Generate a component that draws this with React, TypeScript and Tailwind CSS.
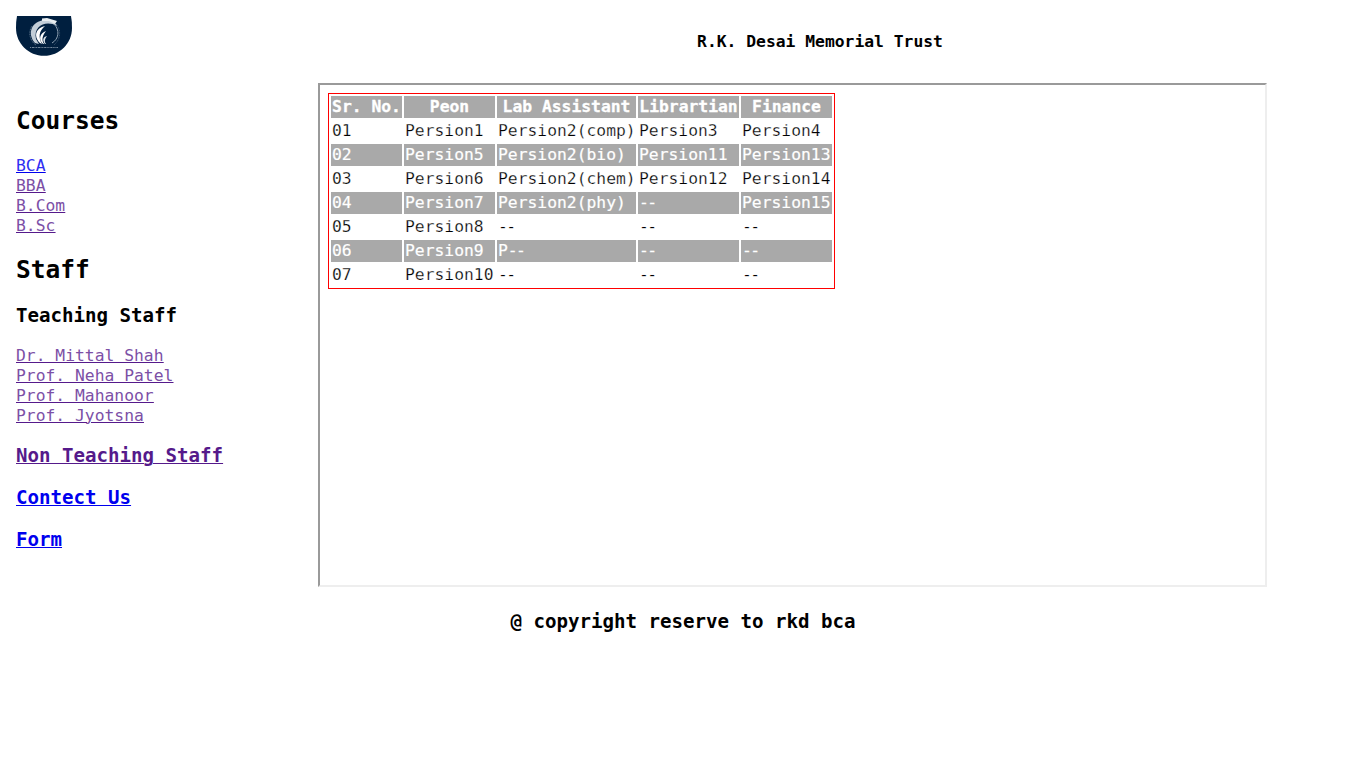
const header = ["Sr. No.", "Peon", "Lab Assistant", "Librartian", "Finance"];
const rows = [
  ["01", "Persion1", "Persion2(comp)", "Persion3", "Persion4"],
  ["02", "Persion5", "Persion2(bio)", "Persion11", "Persion13"],
  ["03", "Persion6", "Persion2(chem)", "Persion12", "Persion14"],
  ["04", "Persion7", "Persion2(phy)", "--", "Persion15"],
  ["05", "Persion8", "--", "--", "--"],
  ["06", "Persion9", "P--", "--", "--"],
  ["07", "Persion10", "--", "--", "--"],
];

function Logo() {
  return (
    <svg className="block h-[42px] w-[56px]" viewBox="0 0 56 42" role="img" aria-label="Trust logo">
      <path d="M1 0H55Q56 5 56 12C56 27.5 43.5 39.8 28 39.8C12.5 39.8 0 27.5 0 12Q0 5 1 0Z" fill="#001f3f" />
      <path d="M20 29A14 14 0 0 1 16 10" fill="none" stroke="#71869b" strokeWidth="1" strokeDasharray="1 .7" />
      <path d="M19 27C11 18 15 5 29 4C35 4 39 6 41 10C31 4 17 9 20 23L23 28Z" fill="#c3ced8" />
      <path d="M26 2.5L31 2L41 5L39 8L33 5L26 5Z" fill="#e8edf0" />
      <path d="M24 27C17 20 20 12 29 10C23 15 22 21 26 28Z" fill="#fff" />
      <path d="M27 28C22 23 24 17 30 15C27 19 25 23 28 28Z" fill="#fff" />
      <path d="M29 28C26 24 27 21 31 20C29 23 28 25 30 28Z" fill="#dce4ea" />
      <path d="M38 8C44 14 43 23 36 27" fill="none" stroke="#8fa1b2" strokeWidth="1" />
      <path d="M40 8C46 15 44 24 38 29" fill="none" stroke="#536c84" strokeWidth=".7" strokeDasharray="1 .7" />
      <path d="M14 31.5H42" stroke="#a4b3c1" strokeWidth=".7" strokeDasharray="1.2 .8 2 .5 1 .6" />
    </svg>
  );
}

function Value({ text }: { text: string }) {
  if (!text.endsWith("--")) return <>{text}</>;
  return (
    <>
      {text.slice(0, -2)}
      <span className="tracking-[-1.6px]">--</span>
    </>
  );
}

const linkList = "flex flex-col items-start text-[16.34px] leading-5 underline decoration-1 underline-offset-1";
const heading = "text-[19.13px] font-bold leading-6";

export default function App() {
  return (
    <div className="h-[768px] w-[1366px] overflow-hidden bg-white font-['DejaVu_Sans_Mono',monospace] text-black">
      <header className="flex h-[83px] pl-4">
        <div className="w-[302px] pt-4">
          <Logo />
        </div>
        <h1 className="w-[1004px] pt-8 text-center text-[16.34px] font-bold leading-5">R.K. Desai Memorial Trust</h1>
      </header>

      <main className="flex h-[504px]">
        <nav className="w-[318px] shrink-0 pl-4 pt-[23px]">
          <h2 className="text-[24.5px] font-bold leading-[30px]">Courses</h2>
          <div className={linkList + " mt-5 text-[#7c4fa6] decoration-[#551a8b]"}>
            <a href="#bca" className="text-[#2e2ef2] underline decoration-[#0000ee] decoration-1 underline-offset-1">BCA</a>
            <a href="#bba">BBA</a>
            <a href="#bcom">B.Com</a>
            <a href="#bsc">B.Sc</a>
          </div>
          <h2 className="mt-[19px] text-[24.5px] font-bold leading-[30px]">Staff</h2>
          <h3 className={heading + " mt-[19px]"}>Teaching Staff</h3>
          <div className={linkList + " mt-[18px] text-[#7c4fa6] decoration-[#551a8b]"}>
            <a href="#shah">Dr. Mittal Shah</a>
            <a href="#patel">Prof. Neha Patel</a>
            <a href="#mahanoor">Prof. Mahanoor</a>
            <a href="#jyotsna">Prof. Jyotsna</a>
          </div>
          <div className="mt-[18px] flex flex-col items-start gap-[18px] text-[19.13px] font-bold leading-6 text-[#0000ee]">
            <a href="#staff" className="text-[#551a8b] underline decoration-1 underline-offset-1">Non Teaching Staff</a>
            <a href="#contact" className="underline decoration-1 underline-offset-1">Contect Us</a>
            <a href="#form" className="underline decoration-1 underline-offset-1">Form</a>
          </div>
        </nav>

        <section className="h-[504px] w-[949px] border-2 border-t-[#9a9a9a] border-r-[#eeeeee] border-b-[#eeeeee] border-l-[#9a9a9a] p-2">
          <table className="w-[507px] table-fixed border-separate border-spacing-[2px] border border-[#ff0000] text-[16.34px] leading-5">
            <colgroup>
              <col className="w-[71px]" />
              <col className="w-[91px]" />
              <col className="w-[139px]" />
              <col className="w-[101px]" />
              <col className="w-[91px]" />
            </colgroup>
            <thead>
              <tr className="h-[22px] bg-[#a9a9a9] text-white [-webkit-text-stroke:0.3px_white]">
                {header.map((name) => (
                  <th key={name} className="whitespace-nowrap p-px text-center font-bold">{name}</th>
                ))}
              </tr>
            </thead>
            <tbody>
              {rows.map((row) => (
                <tr
                  key={row[0]}
                  className="h-[22px] odd:[-webkit-text-stroke:0.25px_white] even:bg-[#a9a9a9] even:text-white even:[-webkit-text-stroke:0.2px_white]"
                >
                  {row.map((cell, i) => (
                    <td key={i} className="whitespace-nowrap p-px">
                      <Value text={cell} />
                    </td>
                  ))}
                </tr>
              ))}
            </tbody>
          </table>
        </section>
      </main>

      <footer className="pt-[23px] text-center text-[19.13px] font-bold leading-6">@ copyright reserve to rkd bca</footer>
    </div>
  );
}
